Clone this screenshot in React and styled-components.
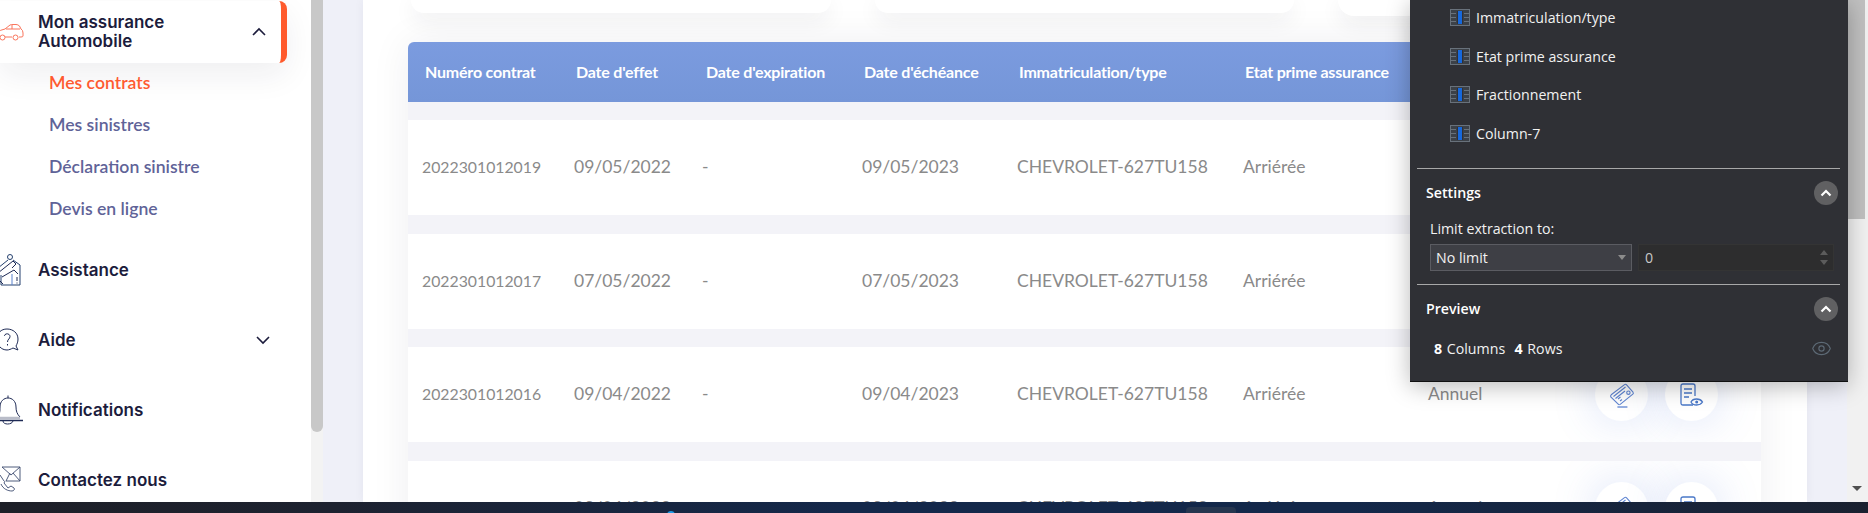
import React from "react";
import styled, { createGlobalStyle } from "styled-components";
import { Eye } from "lucide-react";

const contracts = [
  { num: "2022301012019", start: "09/05/2022", end: "09/05/2023" },
  { num: "2022301012017", start: "07/05/2022", end: "07/05/2023" },
  { num: "2022301012016", start: "09/04/2022", end: "09/04/2023" },
  { num: "2022301012014", start: "09/04/2022", end: "09/04/2023" },
];

const headers = [
  "Numéro contrat",
  "Date d'effet",
  "Date d'expiration",
  "Date d'échéance",
  "Immatriculation/type",
  "Etat prime assurance",
  "Fractionnement",
];

const columns = [
  "Immatriculation/type",
  "Etat prime assurance",
  "Fractionnement",
  "Column-7",
];

const CarIcon = () => (
  <svg width="38" height="34" viewBox="0 0 38 34" fill="none" stroke="#f9755c" strokeWidth="1">
    <path d="M-2 22 V17 Q0 15 5 14 L10 10 Q11 9.500 13 9.500 H16 Q18 9.500 19.500 11 L21 14 Q23 15 23 18 V21 Q23 22 21 22 H19 M12 22 H5 M-2 22 H0" />
    <path d="M6 14 H20 M12 10 V14" />
    <circle cx="2.500" cy="22.500" r="2.500" />
    <circle cx="15.500" cy="22.500" r="2.500" />
  </svg>
);

const AssistanceIcon = () => (
  <svg width="38" height="34" viewBox="0 0 38 34" fill="none" stroke="#24406e" strokeWidth="1">
    <circle cx="10" cy="4" r="2.500" />
    <path d="M-2 15 L8 7 M13 7 L20 12 V32 H1 V22" />
    <path d="M-2 20 L8 12 L13 8 L16 11 L12 15 M2 24 L14 17 L18 21 M-2 26 L3 31" stroke="#1e2a55" />
    <path d="M12 21 V32" stroke="#5b83d0" />
    <path d="M17 24 V28 M17 29.500 V30.500" stroke="#1e2a55" />
  </svg>
);

const HelpIcon = () => (
  <svg width="38" height="34" viewBox="0 0 38 34" fill="none" stroke="#1e2a55" strokeWidth="1">
    <path d="M7 6 C13 6 18 10 18 16 C18 19 17 21 16 23 L18 27 L13 25 C11 26 9 27 7 27 C1 27 -3 22 -3 16 C-3 10 1 6 7 6 Z" />
    <path d="M4.500 13 C4.500 10 10 10 10 13.500 C10 16 7.500 16 7.500 19 M7.500 21 V22.500" />
  </svg>
);

const BellIcon = () => (
  <svg width="38" height="34" viewBox="0 0 38 34" fill="none" stroke="#1e2a55" strokeWidth="1">
    <path d="M8 5 V2.500 M-3 24 C0 21 0 18 0 14 C0 8 4 5 8 5 C12 5 16 8 16 14 C16 18 17 21 20 24" />
    <path d="M-3 25 H20" stroke="#b9bcc8" strokeWidth="2.500" />
    <path d="M-5 27.500 H23" strokeWidth="1.500" />
    <path d="M3 28 C3 32 12 32 13 28" />
  </svg>
);

const MailIcon = () => (
  <svg width="38" height="34" viewBox="0 0 38 34" fill="none" stroke="#3b4a6e" strokeWidth="0.900">
    <path d="M2 4 H20 V18 H6 M2 4 L11 12 L20 4 M6 18 L10 10 M20 18 L13 10" />
    <path d="M0 12 L4 18 M1 21 C3 26 8 28 12 28 C14 28 15 26 14 25 L11 23 L8 25 L4 20 L5 18" />
  </svg>
);

const CardIcon = () => (
  <svg width="26" height="26" viewBox="0 0 26 26" fill="none" stroke="#5f85d2" strokeWidth="1.100">
    <path d="M2.200 12.800 L15.500 2.600 Q16.700 1.800 17.600 2.800 L24 10.200 Q24.800 11.300 23.800 12.200 L11.200 22.400 Q10 23.200 9.200 22.200 L1.800 14.900 Q1.200 13.700 2.200 12.800 Z" />
    <path d="M4.500 14.500 L16.500 5 M6.500 16.500 L16 9 M9 17 L11.500 15 M11 19 L13 17.500" />
    <circle cx="19.400" cy="10.700" r="1.700" />
    <path d="M8.400 25 H18.400" strokeWidth="1.300" />
  </svg>
);

const DocumentIcon = () => (
  <svg width="24" height="24" viewBox="0 0 24 24" fill="none" stroke="#4a78c8" strokeWidth="1.300">
    <path d="M13 22 H3 Q1 22 1 20 V3 Q1 1 3 1 H13 Q15 1 15 3 V13" />
    <path d="M4 6 H12 M4 10 H12 M4 14 H9" strokeWidth="1.500" />
    <path d="M11 19 C13 15 20 15 22.500 19 C20 23 13 23 11 19 Z" fill="#fff" />
    <circle cx="16.700" cy="19" r="1.500" fill="#4a78c8" stroke="none" />
  </svg>
);

const ColumnIcon = () => (
  <svg width="20" height="17" viewBox="0 0 20 17">
    <rect x="0.500" y="0.500" width="19" height="16" fill="#3c4148" stroke="#68717b" />
    <rect x="7" y="2" width="6" height="13" fill="#2f3035" />
    <rect x="8" y="2" width="4" height="13" fill="#1668dc" />
    <path d="M1 4.500 H6 M1 8.500 H6 M1 12.500 H6 M14 4.500 H19 M14 8.500 H19 M14 12.500 H19" stroke="#68717b" />
  </svg>
);

const Chevron = ({ up }) => (
  <svg width="14" height="9" viewBox="0 0 14 9" fill="none" stroke="#1c1c3c" strokeWidth="1.600">
    <path d={up ? "M1 8 L7 2 L13 8" : "M1 1 L7 7 L13 1"} />
  </svg>
);

const CollapseIcon = () => (
  <svg width="12" height="8" viewBox="0 0 12 8" fill="none" stroke="#fff" strokeWidth="2.200">
    <path d="M1.500 6.500 L6 2 L10.500 6.500" />
  </svg>
);

function App() {
  return (
    <>
      <GlobalStyle />
      <Screen>
        <Viewport>
          <Sidebar>
            <ActiveItem>
              <IconSlot>
                <CarIcon />
              </IconSlot>
              <ItemLabel>
                Mon assurance
                <br />
                Automobile
              </ItemLabel>
              <ChevronSlot>
                <Chevron up />
              </ChevronSlot>
            </ActiveItem>

            <SubList>
              <SubItem $active>Mes contrats</SubItem>
              <SubItem>Mes sinistres</SubItem>
              <SubItem>Déclaration sinistre</SubItem>
              <SubItem>Devis en ligne</SubItem>
            </SubList>

            <MenuItem>
              <IconSlot>
                <AssistanceIcon />
              </IconSlot>
              <ItemLabel>Assistance</ItemLabel>
            </MenuItem>
            <MenuItem>
              <IconSlot>
                <HelpIcon />
              </IconSlot>
              <ItemLabel>Aide</ItemLabel>
              <ChevronSlot $down>
                <Chevron />
              </ChevronSlot>
            </MenuItem>
            <MenuItem>
              <IconSlot>
                <BellIcon />
              </IconSlot>
              <ItemLabel>Notifications</ItemLabel>
            </MenuItem>
            <MenuItem>
              <IconSlot>
                <MailIcon />
              </IconSlot>
              <ItemLabel>Contactez nous</ItemLabel>
            </MenuItem>
          </Sidebar>
          <SidebarScroll>
            <SidebarThumb />
          </SidebarScroll>

          <Main>
            <Content>
              <Cards>
                <TopCard />
                <TopCard />
                <TopCard $tall />
              </Cards>

              <Table>
                <HeadRow>
                  {headers.map((h) => (
                    <span key={h}>{h}</span>
                  ))}
                </HeadRow>
                <Rows>
                  {contracts.map((c) => (
                    <Row key={c.num}>
                      <Cell $small>{c.num}</Cell>
                      <Cell>{c.start}</Cell>
                      <Cell $dash>-</Cell>
                      <Cell>{c.end}</Cell>
                      <Cell>CHEVROLET-627TU158</Cell>
                      <Cell>Arriérée</Cell>
                      <Cell>Annuel</Cell>
                      <Actions>
                        <RoundButton>
                          <CardIcon />
                        </RoundButton>
                        <RoundButton>
                          <DocumentIcon />
                        </RoundButton>
                      </Actions>
                    </Row>
                  ))}
                </Rows>
              </Table>
            </Content>

            <Panel>
              <ColumnList>
                {columns.map((c) => (
                  <ColumnRow key={c}>
                    <ColumnIcon />
                    {c}
                  </ColumnRow>
                ))}
              </ColumnList>

              <Divider />
              <SectionHead>
                Settings
                <CollapseButton>
                  <CollapseIcon />
                </CollapseButton>
              </SectionHead>
              <LimitLabel>Limit extraction to:</LimitLabel>
              <LimitRow>
                <SelectBox>
                  No limit
                  <Caret />
                </SelectBox>
                <NumberBox>
                  0
                  <Spinner>
                    <SpinUp />
                    <SpinDown />
                  </Spinner>
                </NumberBox>
              </LimitRow>

              <Divider />
              <SectionHead>
                Preview
                <CollapseButton>
                  <CollapseIcon />
                </CollapseButton>
              </SectionHead>
              <PreviewRow>
                <span>
                  <b>8</b> Columns&nbsp;&nbsp;<b>4</b> Rows
                </span>
                <Eye size={21} color="#5d6a76" strokeWidth={1.3} />
              </PreviewRow>
            </Panel>
          </Main>

          <PageScroll>
            <PageThumb />
            <PageArrow />
          </PageScroll>
        </Viewport>

        <Taskbar>
          <TaskDot />
          <TaskButton />
        </Taskbar>
      </Screen>
    </>
  );
}

export default App;

const GlobalStyle = createGlobalStyle`
  html, body {
    margin: 0;
    padding: 0;
    overflow: hidden;
    background: #fff;
  }
`;

const Screen = styled.div`
  width: 1868px;
  height: 513px;
  display: flex;
  flex-direction: column;
  overflow: hidden;
`;

const Viewport = styled.div`
  flex: 1;
  min-height: 0;
  display: flex;
  overflow: hidden;
`;

const Sidebar = styled.nav`
  width: 311px;
  flex-shrink: 0;
  padding-top: 1px;
  background: #fff;
  font-family: "Inter", "Liberation Sans", sans-serif;
`;

const ActiveItem = styled.div`
  width: 287px;
  height: 62px;
  box-sizing: border-box;
  display: flex;
  align-items: center;
  background: #fff;
  border-right: 6px solid #ff5a2c;
  border-radius: 0 8px 8px 0;
  box-shadow: 0 12px 32px rgba(30, 30, 60, 0.07);
`;

const MenuItem = styled.div`
  width: 287px;
  height: 70px;
  display: flex;
  align-items: center;
`;

const IconSlot = styled.div`
  width: 38px;
  height: 34px;
  flex-shrink: 0;
`;

const ItemLabel = styled.div`
  flex: 1;
  font-size: 17px;
  line-height: 19px;
  font-weight: 600;
  color: #1c1c3c;
`;

const ChevronSlot = styled.div`
  display: flex;
  margin-right: ${(p) => (p.$down ? "17px" : "15px")};
  padding-bottom: ${(p) => (p.$down ? "0" : "2px")};
`;

const SubList = styled.div`
  margin-top: -1px;
  padding: 0 0 5px 49px;
`;

const SubItem = styled.div`
  height: 42px;
  line-height: 42px;
  font-family: "Lato", "Liberation Sans", sans-serif;
  font-size: 17.6px;
  font-weight: 600;
  color: ${(p) => (p.$active ? "#ff5a30" : "#5f6398")};
`;

const SidebarScroll = styled.div`
  width: 12px;
  flex-shrink: 0;
  background: #f3f3f3;
`;

const SidebarThumb = styled.div`
  height: 432px;
  background: #c8c8c8;
  border-radius: 0 0 6px 6px;
`;

const Main = styled.main`
  position: relative;
  flex: 1;
  min-width: 0;
  padding: 0 40px;
  background: #eff0f8;
`;

const Content = styled.div`
  height: 100%;
  padding: 0 46px 0 45px;
  background: #fff;
  box-shadow: 0 0 10px rgba(40, 40, 80, 0.05);
  font-family: "Lato", "Liberation Sans", sans-serif;
`;

const Cards = styled.div`
  display: grid;
  grid-template-columns: 420px 419px 1fr;
  column-gap: 44px;
  align-items: start;
  padding-left: 3px;
  height: 13px;
`;

const TopCard = styled.div`
  height: ${(p) => (p.$tall ? "16px" : "13px")};
  background: #fff;
  border-radius: 0 0 26px 26px;
  box-shadow: 0 6px 22px rgba(30, 30, 50, 0.09);
`;

const Table = styled.section`
  margin-top: 29px;
  background: #f3f3f8;
  border-radius: 6px 0 0 0;
  box-shadow: 0 0 40px rgba(30, 30, 50, 0.07);
`;

const gridColumns = "151px 130px 158px 155px 226px 185px 167px 1fr";

const HeadRow = styled.div`
  height: 60px;
  box-sizing: border-box;
  display: grid;
  grid-template-columns: ${gridColumns};
  align-items: center;
  padding: 0 0 2px 17px;
  background: linear-gradient(#7b9bdf, #7596d8);
  border-radius: 6px 6px 0 0;
  color: #fff;
  font-size: 16px;
  font-weight: 700;
  letter-spacing: -0.2px;
  white-space: nowrap;
`;

const Rows = styled.div`
  display: flex;
  flex-direction: column;
  gap: 18.5px;
  padding-top: 18px;
`;

const Row = styled.div`
  height: 95px;
  box-sizing: border-box;
  flex-shrink: 0;
  display: grid;
  grid-template-columns: ${gridColumns};
  align-items: center;
  padding: 0 0 2px 15px;
  background: #fff;
  overflow: hidden;
`;

const Cell = styled.div`
  font-size: ${(p) => (p.$small ? "15.8px" : "17.5px")};
  margin-left: ${(p) => (p.$small ? "-1px" : p.$dash ? "-2px" : "0")};
  color: #8a8a8a;
  white-space: nowrap;
`;

const Actions = styled.div`
  display: flex;
  gap: 17px;
  margin-top: 2px;
`;

const RoundButton = styled.div`
  width: 53px;
  height: 53px;
  border-radius: 50%;
  display: flex;
  align-items: center;
  justify-content: center;
  background: #fff;
  box-shadow: 0 0 45px rgba(80, 120, 220, 0.22);
`;

const Panel = styled.aside`
  position: absolute;
  z-index: 1;
  top: 0;
  right: -1px;
  width: 438px;
  height: 382px;
  box-sizing: border-box;
  background: #2f3035;
  border-bottom: 1px solid #111;
  box-shadow: 0 4px 22px rgba(0, 0, 0, 0.28);
  color: #f2f2f2;
  font-family: "Open Sans", "Liberation Sans", sans-serif;
  font-size: 14.2px;
`;

const ColumnList = styled.div`
  margin-top: -2px;
  padding: 0 0 14.8px 40px;
`;

const ColumnRow = styled.div`
  height: 38.8px;
  display: flex;
  align-items: center;
  gap: 6px;
  white-space: nowrap;
`;

const Divider = styled.div`
  height: 1px;
  margin: 0 8px 0 7px;
  background: #a8a8a8;
`;

const SectionHead = styled.div`
  display: flex;
  align-items: center;
  justify-content: space-between;
  padding: 12px 10px 0 16px;
  font-weight: 600;
  color: #fff;
`;

const CollapseButton = styled.div`
  width: 24px;
  height: 24px;
  border-radius: 50%;
  display: flex;
  align-items: center;
  justify-content: center;
  background: #606062;
`;

const LimitLabel = styled.div`
  padding: 15px 0 0 20px;
  line-height: 18px;
`;

const LimitRow = styled.div`
  display: flex;
  gap: 6px;
  padding: 6px 14px 13px 20px;
`;

const SelectBox = styled.div`
  position: relative;
  width: 202px;
  height: 27px;
  box-sizing: border-box;
  padding-left: 5px;
  line-height: 25px;
  background: #3e3f45;
  border: 1px solid #5b5c62;
`;

const Caret = styled.span`
  position: absolute;
  right: 5px;
  top: 10px;
  border-left: 4px solid transparent;
  border-right: 4px solid transparent;
  border-top: 5px solid #8c8c8c;
`;

const NumberBox = styled.div`
  position: relative;
  flex: 1;
  height: 27px;
  box-sizing: border-box;
  padding-left: 6px;
  line-height: 25px;
  background: #2d2d2e;
  border: 1px solid #343434;
  color: #c8c8c8;
`;

const Spinner = styled.div`
  position: absolute;
  right: 5px;
  top: 5px;
  display: flex;
  flex-direction: column;
  gap: 5px;
`;

const SpinUp = styled.span`
  border-left: 4px solid transparent;
  border-right: 4px solid transparent;
  border-bottom: 5px solid #5c5c5c;
`;

const SpinDown = styled.span`
  border-left: 4px solid transparent;
  border-right: 4px solid transparent;
  border-top: 5px solid #5c5c5c;
`;

const PreviewRow = styled.div`
  display: flex;
  align-items: center;
  justify-content: space-between;
  padding: 17px 16px 0 24px;
  word-spacing: 1px;
  b {
    font-weight: 700;
    color: #fff;
  }
`;

const PageScroll = styled.div`
  position: relative;
  width: 21px;
  flex-shrink: 0;
  background: #f1f1f1;
`;

const PageThumb = styled.div`
  width: 17px;
  height: 219px;
  margin-left: 1px;
  background: #c0c0c0;
`;

const PageArrow = styled.span`
  position: absolute;
  left: 5px;
  bottom: 11px;
  border-left: 5px solid transparent;
  border-right: 5px solid transparent;
  border-top: 5px solid #505050;
`;

const Taskbar = styled.footer`
  position: relative;
  height: 11px;
  flex-shrink: 0;
  background: linear-gradient(90deg, #1e2028 0%, #1d2230 18%, #14284a 45%, #13284a 72%, #1a2130 100%);
  overflow: hidden;
`;

const TaskDot = styled.span`
  position: absolute;
  left: 667px;
  top: 9px;
  width: 8px;
  height: 8px;
  border-radius: 50%;
  background: #1e9be8;
`;

const TaskButton = styled.span`
  position: absolute;
  left: 1186px;
  top: 5px;
  width: 50px;
  height: 12px;
  border-radius: 4px 4px 0 0;
  background: #26364f;
`;
